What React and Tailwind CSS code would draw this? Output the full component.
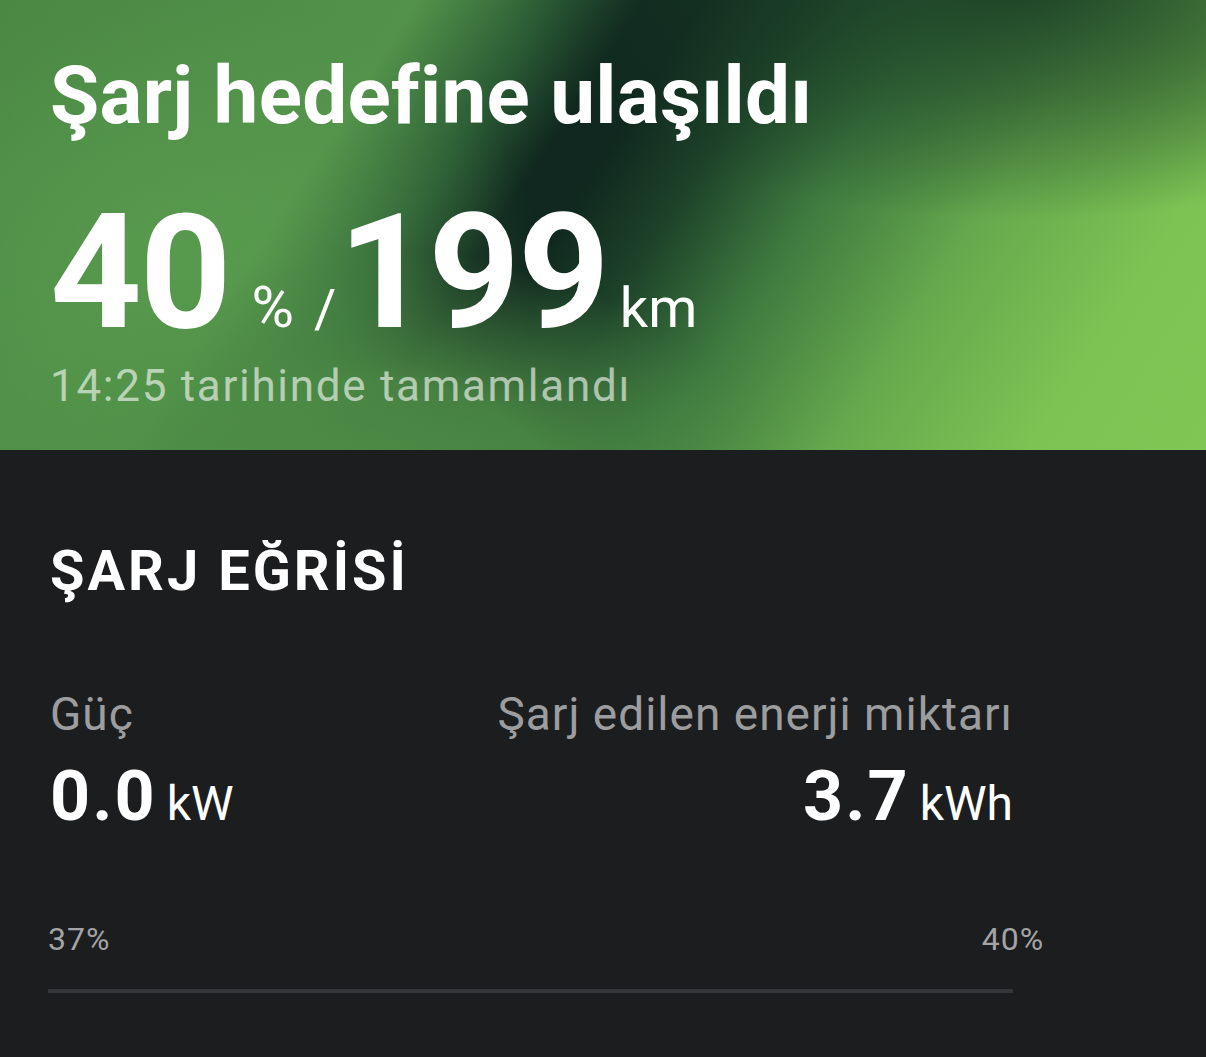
import React from "react";

// ekranın üst kısmı: yeşil degrade zemin üzerinde şarj özeti
const ChargeSummary = ({ percent, range, finishedAt }) => {
    return (
        <div className="h-[450px] pl-[50px] pt-[56px] bg-[radial-gradient(ellipse_400px_240px_at_370px_490px,rgba(79,143,71,1)_0%,rgba(79,143,71,0.85)_45%,rgba(79,143,71,0)_100%),radial-gradient(ellipse_520px_240px_at_1020px_-20px,rgba(24,58,36,0.9)_0%,rgba(24,58,36,0.5)_50%,rgba(24,58,36,0)_100%),radial-gradient(ellipse_360px_260px_at_180px_260px,rgba(92,160,80,0.6)_0%,rgba(92,160,80,0)_100%),linear-gradient(123deg,#4a8844_0%,#52924a_28%,#2a5a34_37%,#10281f_43%,#10281f_47%,#1d4229_54%,#3e7a3f_63%,#66a94d_75%,#7cc353_88%,#80c655_100%)]">
            <h1 className="text-[80px] leading-none font-bold text-white tracking-[0.3px]">
                Şarj hedefine ulaşıldı
            </h1>
            <div className="mt-[72px] flex items-baseline text-white">
                <span className="text-[160px] leading-[130px] font-bold tracking-[-2px]">{percent}</span>
                <span className="ml-[22px] text-[58px] leading-none">%</span>
                <span className="ml-[20px] text-[54px] leading-none">/</span>
                <span className="ml-[2px] text-[160px] leading-[130px] font-bold tracking-[-2px]">{range}</span>
                <span className="ml-[12px] text-[56px] leading-none">km</span>
            </div>
            <p className="mt-[26px] text-[44px] leading-none tracking-[1.7px] text-white/60">
                {finishedAt} tarihinde tamamlandı
            </p>
        </div>
    )
}

// güç ve enerji değerleri, sol ve sağ sütun
const Stat = ({ label, value, unit, right }) => (
    <div className={right ? "flex flex-col items-end" : "flex flex-col items-start"}>
        <span className="whitespace-nowrap text-[46px] leading-none tracking-[1px] text-[#9c9d9f]">{label}</span>
        <div className="mt-[24px] flex items-baseline text-white">
            <span className="text-[70px] leading-none font-bold tracking-[2px]">{value}</span>
            <span className="ml-[10px] text-[48px] leading-none">{unit}</span>
        </div>
    </div>
)

export default function App() {
    return (
        <div className="w-[1206px] h-[1057px] overflow-hidden bg-[#1c1d1f] font-['Roboto',sans-serif]">
            <ChargeSummary percent="40" range="199" finishedAt="14:25" />

            <div className="pl-[50px] pt-[93px]">
                <h2 className="text-[56px] leading-none font-bold text-white tracking-[3px]">ŞARJ EĞRİSİ</h2>

                <div className="mt-[92px] w-[963px] flex justify-between">
                    <Stat label="Güç" value="0.0" unit="kW" />
                    <Stat label="Şarj edilen enerji miktarı" value="3.7" unit="kWh" right />
                </div>

                {/* şarj yüzdesi ekseni */}
                <div className="-ml-[2px] mt-[92px] w-[965px]">
                    <div className="flex justify-between text-[32px] leading-none tracking-[1px] text-[#a3a4a6]">
                        <span>37%</span>
                        <span className="translate-x-1/2">40%</span>
                    </div>
                    <div className="mt-[34px] h-[4px] bg-[#35363a]" />
                </div>
            </div>
        </div>
    )
}
